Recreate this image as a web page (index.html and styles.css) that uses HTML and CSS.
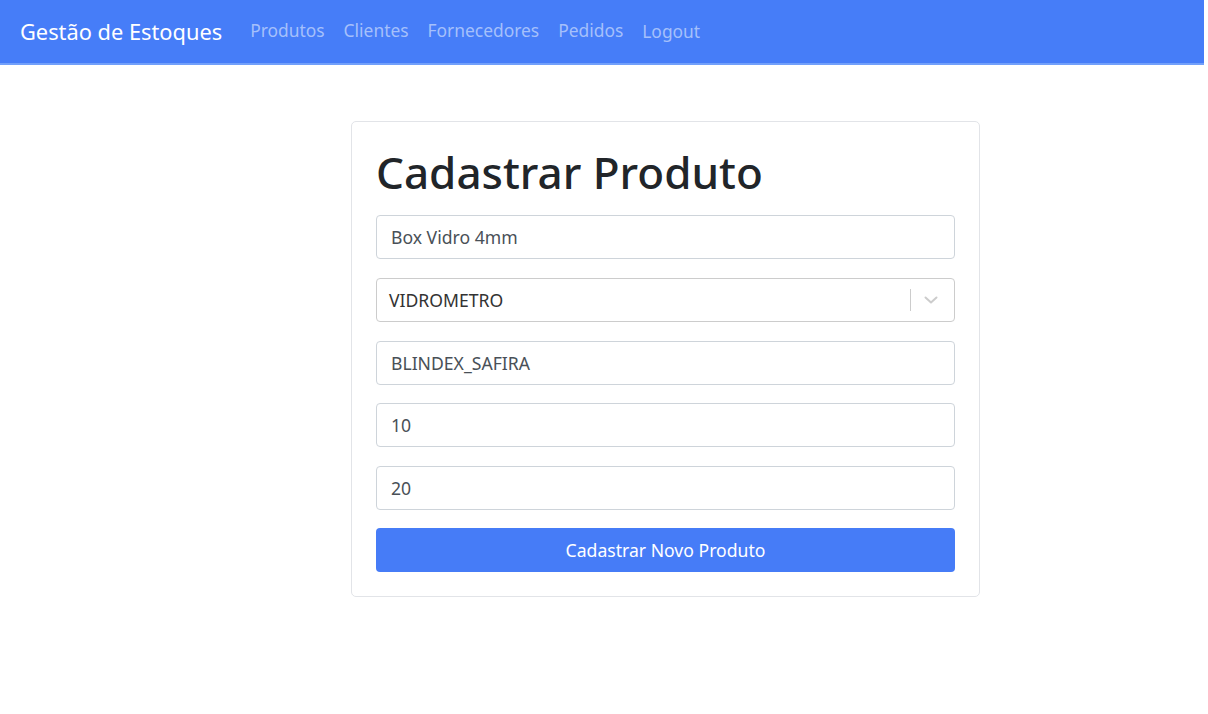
FILE: index.html
```html
<!DOCTYPE html>
<html lang="pt-BR">
<head>
<meta charset="utf-8">
<title>Gestão de Estoques</title>
<link rel="stylesheet" href="styles.css">
</head>
<body>
<div class="page">
  <nav class="navbar">
    <span class="brand">Gestão de Estoques</span>
    <ul class="nav">
      <li><a href="#">Produtos</a></li>
      <li><a href="#">Clientes</a></li>
      <li><a href="#">Fornecedores</a></li>
      <li><a href="#">Pedidos</a></li>
      <li><span class="logout">Logout</span></li>
    </ul>
  </nav>
  <main class="main">
    <form class="card">
      <h1 class="title">Cadastrar Produto</h1>
      <input class="field" type="text" value="Box Vidro 4mm">
      <div class="select">
        <span class="select-value">VIDROMETRO</span>
        <span class="select-sep"></span>
        <svg class="select-chev" width="20" height="20" viewBox="0 0 20 20"><path d="M4.5 7.5 L10 12.5 L15.5 7.5" fill="none" stroke="#cccccc" stroke-width="2" stroke-linecap="round" stroke-linejoin="round"/></svg>
      </div>
      <input class="field" type="text" value="BLINDEX_SAFIRA">
      <input class="field" type="text" value="10">
      <input class="field" type="text" value="20">
      <button class="btn" type="button">Cadastrar Novo Produto</button>
    </form>
  </main>
</div>
</body>
</html>
```

FILE: styles.css
```css
* { box-sizing: border-box; }
html, body { margin: 0; padding: 0; background: #fff; }
body {
  font-family: "Noto Sans", "Open Sans", sans-serif;
  color: #212529;
}
.page { width: 1204px; }
.navbar {
  height: 65px;
  background: #467df8;
  border-bottom: 2px solid #72a0fa;
  display: flex;
  align-items: center;
  padding: 0 20px;
}
.brand {
  color: #fff;
  font-size: 21.8px;
  margin-right: 28px;
}
.nav {
  list-style: none;
  display: flex;
  gap: 19px;
  margin: 0 0 4px 0;
  padding: 0;
}
.nav a, .logout {
  color: #a5c0fb;
  text-decoration: none;
  font-size: 17.4px;
}
.logout { position: relative; top: 1px; }
.main {
  display: flex;
  padding: 56px 0 0 351px;
}
.card {
  width: 629px;
  border: 1px solid #e2e4e8;
  border-radius: 5px;
  padding: 24px;
  display: flex;
  flex-direction: column;
  gap: 18.6px;
}
.title {
  font-size: 44px;
  font-weight: 500;
  margin: 0 0 -2px 0;
  line-height: 1.2;
  color: #212529;
}
.field, .select {
  height: 44px;
  width: 100%;
  border: 1px solid #ced4da;
  border-radius: 4px;
  font-family: inherit;
  font-size: 17.6px;
  color: #495057;
  padding: 0 14px;
  background: #fff;
  outline: none;
}
.select {
  display: flex;
  align-items: center;
  border-color: #cccccc;
  padding: 0 0 0 12px;
}
.select-value { flex: 1; color: #333; }
.select-sep {
  width: 1px;
  height: 22px;
  background: #cccccc;
  margin-right: 10px;
}
.select-chev { margin-right: 13px; }
.btn {
  height: 44px;
  width: 100%;
  border: none;
  border-radius: 4px;
  background: #467cf7;
  color: #fff;
  font-family: inherit;
  font-size: 17.6px;
}
```
